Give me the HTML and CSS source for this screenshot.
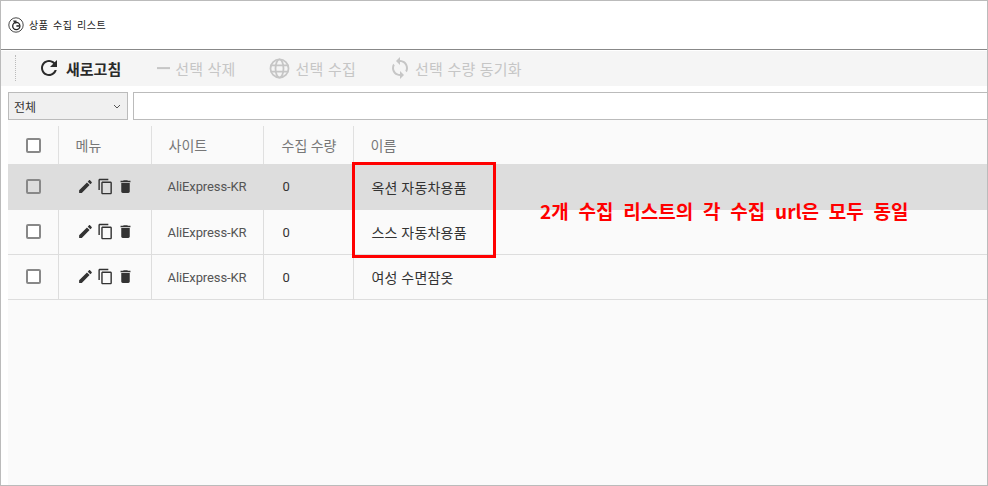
FILE: index.html
```html
<!DOCTYPE html>
<html lang="ko">
<head>
  <meta charset="UTF-8">
  <title>상품 수집 리스트</title>
  <link rel="stylesheet" href="styles.css">
</head>
<body>
  <div class="frame">
    <!-- Title -->
    <div class="title-bar">
      <svg class="logo" viewBox="0 0 16 16">
        <circle cx="8" cy="8" r="7.2" fill="none" stroke="#333" stroke-width="0.9"/>
        <circle cx="8.3" cy="9" r="3.6" fill="none" stroke="#222" stroke-width="1.3"/>
        <path d="M5 3.5h3.5v3h-2z" fill="#333"/>
        <path d="M8.4 8.2h3v1.5h-3z" fill="#222"/>
      </svg>
      <span>상품 수집 리스트</span>
    </div>

    <!-- Toolbar -->
    <div class="toolbar">
      <div class="grip"></div>
      <button class="tool active">
        <svg class="tool-icon" viewBox="0 0 24 24"><path d="M17.65 6.35C16.2 4.9 14.21 4 12 4c-4.42 0-7.99 3.58-7.99 8s3.57 8 7.99 8c3.73 0 6.84-2.55 7.73-6h-2.08c-.82 2.33-3.04 4-5.65 4-3.31 0-6-2.69-6-6s2.69-6 6-6c1.66 0 3.14.69 4.22 1.78L13 11h7V4l-2.35 2.35z"/></svg>
        새로고침
      </button>
      <button class="tool tool-delete">
        <svg class="tool-icon dash" viewBox="0 0 14 14"><path d="M0 6h14v2.2H0z"/></svg>
        선택 삭제
      </button>
      <button class="tool tool-collect">
        <svg class="tool-icon globe" viewBox="0 0 20 20">
          <circle cx="10" cy="10" r="8.6"/>
          <ellipse cx="10" cy="10" rx="3.8" ry="8.6"/>
          <path d="M1.6 7h16.8M1.6 13h16.8"/>
        </svg>
        선택 수집
      </button>
      <button class="tool tool-sync">
        <svg class="tool-icon" viewBox="0 0 24 24"><path d="M12 4V1L8 5l4 4V6c3.31 0 6 2.69 6 6 0 1.01-.25 1.97-.7 2.8l1.46 1.46C19.54 15.03 20 13.57 20 12c0-4.42-3.58-8-8-8zm0 14c-3.31 0-6-2.69-6-6 0-1.01.25-1.97.7-2.8L5.24 7.74C4.46 8.97 4 10.43 4 12c0 4.42 3.58 8 8 8v3l4-4-4-4v3z"/></svg>
        선택 수량 동기화
      </button>
    </div>

    <!-- Filter -->
    <div class="filter">
      <div class="select">
        <span>전체</span>
        <svg class="caret" viewBox="0 0 8 5"><path d="M1 1l3 3 3-3" fill="none" stroke="#555" stroke-width="1"/></svg>
      </div>
      <div class="search"></div>
    </div>

    <!-- List -->
    <div class="list">
      <table>
        <thead>
          <tr>
            <th class="col-check"><span class="check"></span></th>
            <th class="col-menu">메뉴</th>
            <th class="col-site">사이트</th>
            <th class="col-count">수집 수량</th>
            <th class="col-name">이름</th>
          </tr>
        </thead>
        <tbody>
          <tr class="selected">
            <td class="col-check"><span class="check"></span></td>
            <td class="col-menu">
              <div class="actions">
                <svg viewBox="0 0 24 24"><path d="M3 17.25V21h3.75L17.81 9.94l-3.75-3.75L3 17.25zM20.71 7.04c.39-.39.39-1.02 0-1.41l-2.34-2.34c-.39-.39-1.02-.39-1.41 0l-1.83 1.83 3.75 3.75 1.83-1.83z"/></svg>
                <svg viewBox="0 0 24 24"><path d="M16 1H4c-1.1 0-2 .9-2 2v14h2V3h12V1zm3 4H8c-1.1 0-2 .9-2 2v14c0 1.1.9 2 2 2h11c1.1 0 2-.9 2-2V7c0-1.1-.9-2-2-2zm0 16H8V7h11v14z"/></svg>
                <svg viewBox="0 0 24 24"><path d="M6 19c0 1.1.9 2 2 2h8c1.1 0 2-.9 2-2V7H6v12zM19 4h-3.5l-1-1h-5l-1 1H5v2h14V4z"/></svg>
              </div>
            </td>
            <td class="col-site">AliExpress-KR</td>
            <td class="col-count">0</td>
            <td class="name">옥션 자동차용품</td>
          </tr>
          <tr>
            <td class="col-check"><span class="check"></span></td>
            <td class="col-menu">
              <div class="actions">
                <svg viewBox="0 0 24 24"><path d="M3 17.25V21h3.75L17.81 9.94l-3.75-3.75L3 17.25zM20.71 7.04c.39-.39.39-1.02 0-1.41l-2.34-2.34c-.39-.39-1.02-.39-1.41 0l-1.83 1.83 3.75 3.75 1.83-1.83z"/></svg>
                <svg viewBox="0 0 24 24"><path d="M16 1H4c-1.1 0-2 .9-2 2v14h2V3h12V1zm3 4H8c-1.1 0-2 .9-2 2v14c0 1.1.9 2 2 2h11c1.1 0 2-.9 2-2V7c0-1.1-.9-2-2-2zm0 16H8V7h11v14z"/></svg>
                <svg viewBox="0 0 24 24"><path d="M6 19c0 1.1.9 2 2 2h8c1.1 0 2-.9 2-2V7H6v12zM19 4h-3.5l-1-1h-5l-1 1H5v2h14V4z"/></svg>
              </div>
            </td>
            <td class="col-site">AliExpress-KR</td>
            <td class="col-count">0</td>
            <td class="name">스스 자동차용품</td>
          </tr>
          <tr>
            <td class="col-check"><span class="check"></span></td>
            <td class="col-menu">
              <div class="actions">
                <svg viewBox="0 0 24 24"><path d="M3 17.25V21h3.75L17.81 9.94l-3.75-3.75L3 17.25zM20.71 7.04c.39-.39.39-1.02 0-1.41l-2.34-2.34c-.39-.39-1.02-.39-1.41 0l-1.83 1.83 3.75 3.75 1.83-1.83z"/></svg>
                <svg viewBox="0 0 24 24"><path d="M16 1H4c-1.1 0-2 .9-2 2v14h2V3h12V1zm3 4H8c-1.1 0-2 .9-2 2v14c0 1.1.9 2 2 2h11c1.1 0 2-.9 2-2V7c0-1.1-.9-2-2-2zm0 16H8V7h11v14z"/></svg>
                <svg viewBox="0 0 24 24"><path d="M6 19c0 1.1.9 2 2 2h8c1.1 0 2-.9 2-2V7H6v12zM19 4h-3.5l-1-1h-5l-1 1H5v2h14V4z"/></svg>
              </div>
            </td>
            <td class="col-site">AliExpress-KR</td>
            <td class="col-count">0</td>
            <td class="name">여성 수면잠옷</td>
          </tr>
        </tbody>
      </table>
    </div>

    <!-- Annotation over the screenshot -->
    <div class="mark-box"></div>
    <div class="mark-text">2개 수집 리스트의 각 수집 url은 모두 동일</div>
  </div>
</body>
</html>
```

FILE: styles.css
```css
* {
  box-sizing: border-box;
}
html, body {
  margin: 0;
  height: 100%;
}
body {
  font-family: "Noto Sans CJK KR", "Noto Sans", sans-serif;
  color: #333;
  background: #fff;
}
.frame {
  position: relative;
  display: flex;
  flex-direction: column;
  height: 486px;
  padding-left: 7px;
  border: 1px solid #bbb;
  overflow: hidden;
}
.title-bar {
  display: flex;
  align-items: center;
  gap: 5px;
  height: 48px;
  padding-bottom: 1px;
  font-size: 10px;
  color: #222;
  letter-spacing: 0.6px;
  word-spacing: 1px;
}
.logo {
  width: 16px;
  height: 16px;
}
.toolbar {
  display: flex;
  align-items: center;
  height: 37px;
  margin-left: -7px;
  padding-left: 7px;
  border-top: 1px solid #888;
  background: linear-gradient(#fff 0 1px, #f5f5f5 1px);
}
.grip {
  width: 1px;
  height: 26px;
  margin-left: 7px;
  border-left: 1px dotted #bbb;
}
.tool {
  display: flex;
  align-items: center;
  padding: 0;
  border: 0;
  background: none;
  font: inherit;
  font-size: 15px;
  color: #c6c6c6;
}
.tool-icon {
  width: 24px;
  height: 24px;
  fill: currentColor;
}
.active {
  margin-left: 21px;
  gap: 5px;
  font-weight: 700;
  color: #2a2a2a;
}
.tool-delete {
  margin-left: 36px;
  gap: 5px;
  letter-spacing: 0.2px;
}
.dash {
  width: 13px;
  height: 14px;
}
.tool-collect {
  margin-left: 33px;
  gap: 6px;
  letter-spacing: 0.2px;
}
.globe {
  width: 21px;
  height: 21px;
  fill: none;
  stroke: currentColor;
  stroke-width: 1.7;
}
.tool-sync {
  margin-left: 32px;
  gap: 3px;
  letter-spacing: 0.2px;
}
.filter {
  display: flex;
  gap: 5px;
  height: 28px;
  margin-top: 6px;
}
.select {
  display: flex;
  align-items: center;
  justify-content: space-between;
  width: 120px;
  padding: 0 6px 0 5px;
  border: 1px solid #bbb;
  background: #f0f0f0;
  font-size: 12px;
  color: #333;
}
.caret {
  width: 8px;
  height: 5px;
}
.search {
  flex: 1;
  margin-right: -1px;
  border: 1px solid #bbb;
  background: #fff;
}
.list {
  flex: 1;
  padding-top: 6px;
  background: #fafafa;
}
table {
  width: 100%;
  border-collapse: collapse;
  table-layout: fixed;
  font-family: Roboto, "Noto Sans CJK KR", sans-serif;
  font-size: 13px;
}
th {
  height: 38px;
  padding: 0 0 0 16px;
  border-right: 1px solid #e0e0e0;
  font-size: 14px;
  font-weight: 400;
  text-align: left;
  color: #777;
}
th:last-child {
  border-right: 0;
}
td {
  height: 45px;
  padding: 1px 0 0 16px;
  border-right: 1px solid #ddd;
  border-bottom: 1px solid #ddd;
  color: #555;
}
td:last-child {
  border-right: 0;
}
.selected td {
  background: #ddd;
}
th.col-check, td.col-check {
  width: 50px;
  padding: 0 0 0 18px;
}
.col-menu {
  width: 93px;
}
th.col-menu {
  padding-left: 17px;
}
td.col-menu {
  padding: 0 0 0 18px;
}
.col-site {
  width: 112px;
}
th.col-site {
  padding-left: 17px;
}
td.col-site {
  letter-spacing: -0.1px;
}
.col-count {
  width: 90px;
}
th.col-count {
  padding-left: 18px;
}
td.col-count {
  padding-left: 19px;
  color: #333;
}
th.col-name {
  padding-left: 17px;
}
td.name {
  padding-left: 18px;
  font-size: 14px;
  letter-spacing: 0.2px;
  color: #333;
}
.check {
  display: block;
  width: 15px;
  height: 15px;
  border: 2px solid #888;
  border-radius: 2px;
  background: #fff;
}
.selected .check {
  background: #ddd;
}
.actions {
  display: flex;
  gap: 3px;
}
.actions svg {
  width: 17px;
  height: 17px;
  fill: #333;
}
.mark-box {
  position: absolute;
  left: 351px;
  top: 161px;
  width: 144px;
  height: 96px;
  border: 3px solid #f00;
}
.mark-text {
  position: absolute;
  left: 539px;
  top: 198px;
  font-size: 19px;
  font-weight: 700;
  line-height: 24px;
  color: #f00;
  word-spacing: 4.5px;
  white-space: nowrap;
}
```
